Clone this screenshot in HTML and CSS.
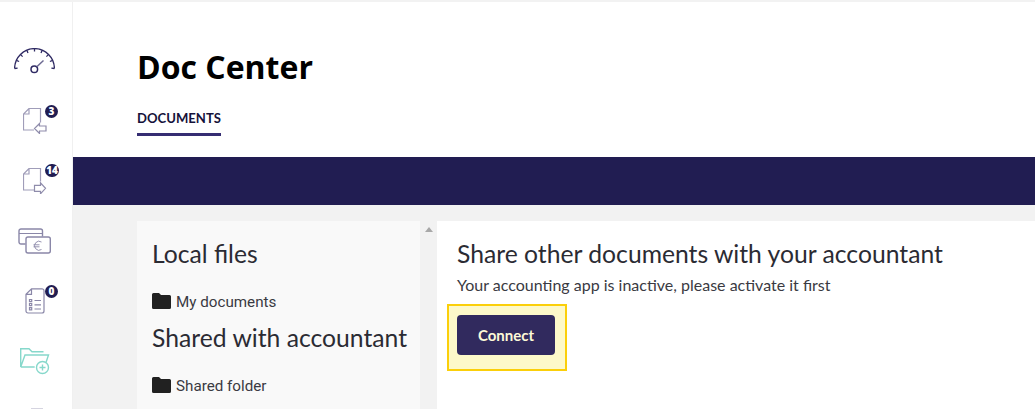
FILE: index.html
```html
<!DOCTYPE html>
<html lang="en">
<head>
    <meta charset="UTF-8">
    <title>Doc Center</title>
    <link rel="stylesheet" href="styles.css">
</head>
<body>
    <div class="app">
        <div class="sidebar">
            <div class="nav-item nav-gauge">
                <svg width="41" height="26" viewBox="0 0 41 26" fill="none" stroke="#2f2a63" stroke-width="1.300">
                    <path d="M.6 20.500C.6 9.500 9.500 .6 20.500 .6S40.400 9.500 40.400 20.500"/>
                    <path d="M.6 20.500l3-.3M2.300 12.300l2.800 1.200M6.400 6.400l2.200 2.200M12.800 2.200l1.200 2.800M20.500 .6v3M28.200 2.200L27 5M34.600 6.400l-2.200 2.200M38.700 12.300l-2.800 1.200M40.400 20.500l-3-.3"/>
                    <circle cx="20.300" cy="21.200" r="3.300" stroke-width="1.500"/>
                    <path d="M22.800 18.800L29.500 12.500" stroke="#6d6a92" stroke-width="1.500"/>
                </svg>
            </div>
            <div class="nav-item nav-doc">
                <svg width="24" height="26" viewBox="0 0 24 26" fill="none" stroke="#a09db9" stroke-width="1.200">
                    <path d="M6 .5h11.500v14M11 22H.5V6L6 .5V6H.5"/>
                    <path d="M23 18h-6.500v-2.500l-5 5 5 5v-2.500h6.500z" stroke="#8f8cab"/>
                </svg>
                <span class="badge">3</span>
            </div>
            <div class="nav-item nav-doc">
                <svg width="24" height="26" viewBox="0 0 24 26" fill="none" stroke="#a09db9" stroke-width="1.200">
                    <path d="M6 .5h11.500v13M11 22H.5V6L6 .5V6H.5"/>
                    <path d="M11.500 17.300h6v-2.500l5 5.500-5 5.500v-2.500h-6z" stroke="#8f8cab"/>
                </svg>
                <span class="badge badge-wide">14</span>
            </div>
            <div class="nav-item nav-money">
                <svg width="33" height="26" viewBox="0 0 33 26" fill="none" stroke="#8a87a8" stroke-width="1.400">
                    <path d="M7.500 16H3a2 2 0 0 1-2-2V3a2 2 0 0 1 2-2h19.500a2 2 0 0 1 2 2v5.500"/>
                    <path d="M1 5.500h23.500" stroke-width="1"/>
                    <rect x="8" y="9" width="24.300" height="16" rx="2"/>
                    <path d="M23.500 14a4.500 4.500 0 1 0 0 7.500M15.500 16.800h6M15.500 18.800h6" stroke-width=".9"/>
                </svg>
            </div>
            <div class="nav-item nav-list">
                <svg width="20" height="26" viewBox="0 0 20 26" fill="none" stroke="#8a87a8" stroke-width="1.200">
                    <path d="M6.500 .8H17a2 2 0 0 1 2 2V23a2 2 0 0 1-2 2H3a2 2 0 0 1-2-2V6.300zM6.500 .8v5.500H1"/>
                    <path d="M4.500 11.500h2.200v2.200H4.500zM4.500 15.500h2.200v2.200H4.500zM4.500 19.700h2.200v2.200H4.500zM9.500 12.500h6.500M9.500 16.800h6.500M9.500 21h6.500"/>
                </svg>
                <span class="badge">0</span>
            </div>
            <div class="nav-item nav-folder">
                <svg width="30" height="27" viewBox="0 0 30 27" fill="none" stroke="#86d8cb" stroke-width="1.400">
                    <path d="M.7 19V.8h8.300l3 3h11.500M.7 19L5 7h23.500L26 14.500M.7 19h14"/>
                    <circle cx="22.500" cy="19.500" r="6"/>
                    <path d="M22.500 16.500v6M19.500 19.500h6"/>
                </svg>
            </div>
            <div class="nav-stub"></div>
        </div>

        <div class="page">
            <div class="page-header">
                <h1 class="page-title">Doc Center</h1>
                <div class="tabs">
                    <span class="tab active">DOCUMENTS</span>
                </div>
            </div>
            <div class="band"></div>
            <div class="content">
                <div class="folders">
                    <h2 class="folders-title">Local files</h2>
                    <div class="folder-item">
                        <svg class="folder-icon" width="19" height="16" viewBox="0 0 19 16"><path d="M1.500 0h5.500l2 2h8.500a1.500 1.500 0 0 1 1.500 1.500v11a1.500 1.500 0 0 1-1.500 1.500h-16a1.500 1.500 0 0 1-1.500-1.500v-13a1.500 1.500 0 0 1 1.500-1.500z"/></svg>
                        <span>My documents</span>
                    </div>
                    <h2 class="folders-title second">Shared with accountant</h2>
                    <div class="folder-item">
                        <svg class="folder-icon" width="19" height="16" viewBox="0 0 19 16"><path d="M1.500 0h5.500l2 2h8.500a1.500 1.500 0 0 1 1.500 1.500v11a1.500 1.500 0 0 1-1.500 1.500h-16a1.500 1.500 0 0 1-1.500-1.500v-13a1.500 1.500 0 0 1 1.500-1.500z"/></svg>
                        <span>Shared folder</span>
                    </div>
                </div>
                <div class="scroll-strip"><span class="scroll-arrow"></span></div>
                <div class="share-panel">
                    <h2 class="share-title">Share other documents with your accountant</h2>
                    <p class="share-text">Your accounting app is inactive, please activate it first</p>
                    <div class="highlight">
                        <button class="btn">Connect</button>
                    </div>
                </div>
            </div>
        </div>
    </div>
</body>
</html>
```

FILE: styles.css
```css
* {
    margin: 0;
    padding: 0;
    box-sizing: border-box;
}

html, body {
    height: 100%;
    overflow: hidden;
}

body {
    font-family: 'Lato', 'Liberation Sans', sans-serif;
    background: #fff;
    color: #2b2b33;
}

.app {
    display: flex;
    height: 409px;
    border-top: 2px solid #f2f2f2;
}

.sidebar {
    width: 73px;
    flex-shrink: 0;
    border-right: 1px solid #f0f0f0;
    background: #fff;
    display: flex;
    flex-direction: column;
    overflow: hidden;
    padding-top: 46px;
}

.nav-item {
    position: relative;
    flex-shrink: 0;
    height: 60px;
}

.nav-item svg {
    display: block;
}

.nav-gauge {
    padding-left: 14px;
}

.nav-doc {
    padding-left: 23px;
}

.nav-money {
    padding-left: 18px;
}

.nav-list {
    padding-left: 25px;
}

.nav-folder {
    padding-left: 20px;
}

.nav-stub {
    width: 12px;
    height: 2px;
    margin-left: 31px;
    background: #d5d4e0;
    flex-shrink: 0;
}

.badge {
    position: absolute;
    top: -3px;
    left: 45px;
    width: 13px;
    height: 13px;
    border-radius: 50%;
    background: #211d52;
    color: #fff;
    font-family: 'Open Sans', sans-serif;
    font-size: 10px;
    font-weight: 800;
    line-height: 13px;
    text-align: center;
}

.badge-wide {
    width: 14px;
    top: -4px;
    border-radius: 7px;
}

.page {
    flex: 1;
    display: flex;
    flex-direction: column;
    min-width: 0;
}

.page-header {
    height: 155px;
    padding: 43px 0 0 64px;
}

.page-title {
    font-family: 'Open Sans', sans-serif;
    font-size: 32px;
    font-weight: 700;
    line-height: 44px;
    color: #000;
}

.tabs {
    display: flex;
    margin-top: 21px;
}

.tab {
    font-size: 13.100px;
    font-weight: 700;
    line-height: 16px;
    padding-bottom: 7px;
    border-bottom: 3px solid #352d72;
    color: #15123a;
}

.band {
    height: 48px;
    background: #211d52;
}

.content {
    flex: 1;
    display: flex;
    background: #f2f2f2;
    padding: 16px 0 0 64px;
    overflow: hidden;
}

.folders {
    width: 283px;
    flex-shrink: 0;
    background: #f9f9f9;
    padding: 16px 0 0 15px;
}

.folders-title {
    font-size: 24.700px;
    font-weight: 400;
    line-height: 34px;
    color: #2b2b33;
}

.folders-title.second {
    margin-top: 9px;
}

.folder-item {
    display: flex;
    align-items: center;
    gap: 5px;
    margin-top: 21px;
    height: 20px;
    font-family: 'Roboto', sans-serif;
    font-size: 15.200px;
    color: #3a3a42;
}

.folder-icon {
    fill: #212121;
    margin-top: -3px;
}

.scroll-strip {
    width: 17px;
    flex-shrink: 0;
    display: flex;
    justify-content: center;
    padding-top: 6px;
}

.scroll-arrow {
    width: 0;
    height: 0;
    border-left: 4px solid transparent;
    border-right: 4px solid transparent;
    border-bottom: 5px solid #a8a8a8;
}

.share-panel {
    flex: 1;
    background: #fff;
    padding: 16px 0 0 20px;
}

.share-title {
    font-size: 24.700px;
    font-weight: 400;
    line-height: 34px;
    color: #2b2b33;
}

.share-text {
    font-size: 16px;
    line-height: 20px;
    margin-top: 4px;
    color: #3a3a42;
}

.highlight {
    width: 120px;
    height: 67px;
    margin: 9px 0 0 -10px;
    padding: 9px 8px;
    background: #fdf9c9;
    border: 2px solid #fbcf0a;
}

.btn {
    display: block;
    width: 98px;
    height: 40px;
    border: none;
    border-radius: 4px;
    background: #312a5e;
    color: #fdf9d8;
    cursor: pointer;
    font-family: 'Lato', sans-serif;
    font-size: 15px;
    font-weight: 700;
}
```
